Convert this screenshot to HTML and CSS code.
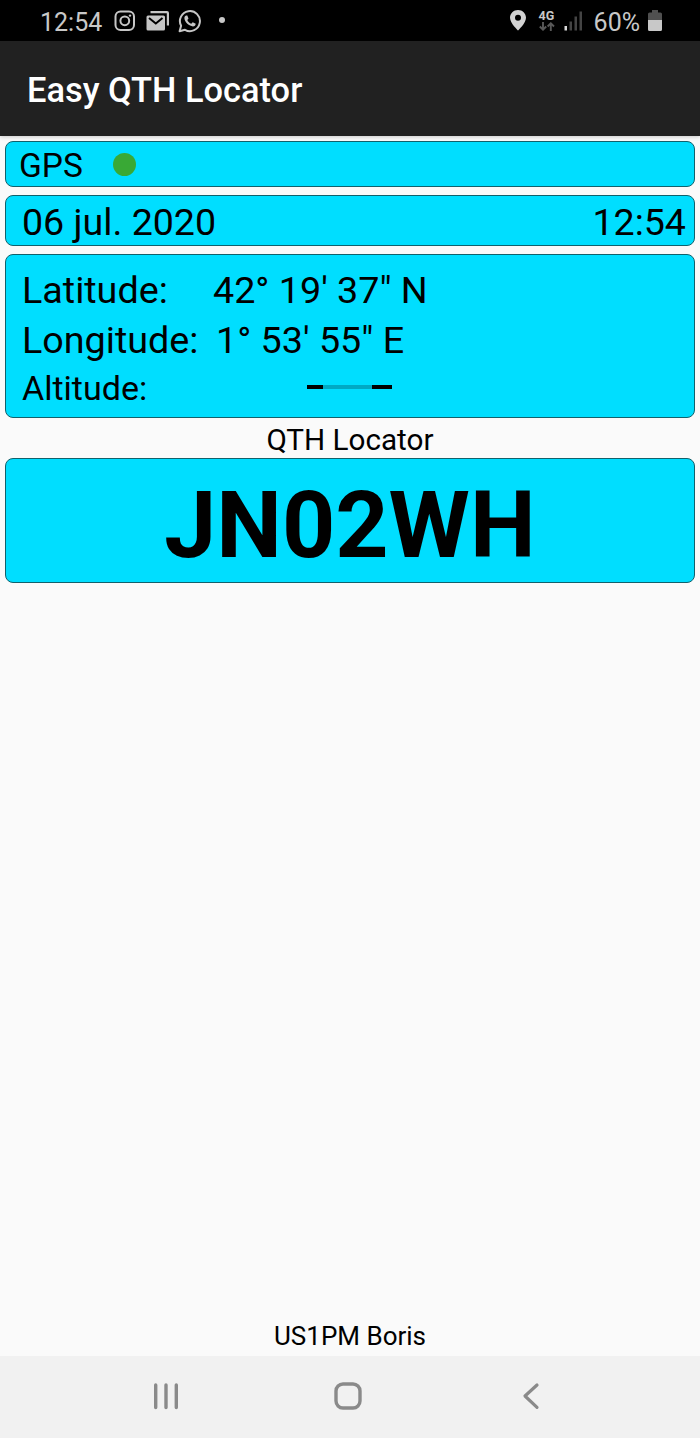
FILE: index.html
```
<!DOCTYPE html>
<html lang="en">

<head>
  <meta charset="UTF-8">
  <meta name="viewport" content="width=device-width, initial-scale=1.0">
  <title>Easy QTH Locator</title>
  <link rel="stylesheet" href="styles.css">
</head>

<body>
  <div class="status-bar">
    <div class="status-left">
      <span class="clock">12:54</span>
      <svg class="icon-instagram" width="22" height="22" viewBox="0 0 22 22" fill="none" stroke="#c6c6c6" stroke-width="2">
        <rect x="1.5" y="1.5" width="18.5" height="18.5" rx="5" />
        <circle cx="10.8" cy="10.8" r="4.4" />
        <circle cx="16" cy="5.6" r="1.2" fill="#c6c6c6" stroke="none" />
      </svg>
      <svg class="icon-mail" width="24" height="22" viewBox="0 0 24 22">
        <path d="M4.500 1H21a2 2 0 0 1 2 2v12.500h-2.200V3.200H4.500z" fill="#c6c6c6" />
        <rect x="0.500" y="5.500" width="18.500" height="15" rx="1.500" fill="#c6c6c6" />
        <path d="M3 8l6.800 5.500L16.500 8" fill="none" stroke="#000" stroke-width="2" />
      </svg>
      <svg class="icon-whatsapp" width="24" height="24" viewBox="0 0 24 24">
        <path d="M1.600 22.300l1.500-5.500A10 10 0 1 1 7 20.800z" fill="none" stroke="#c6c6c6" stroke-width="2" stroke-linejoin="round" />
        <path d="M8.200 6.500c-.8 0-1.800 1-1.800 2.600 0 4 5 8.300 8.500 8.300 1.600 0 2.800-1 2.800-2.600l-3-1.500-1.400 1.500c-1.800-.7-3.300-2.200-4-3.800l1.200-1.500-1.200-3z" fill="#c6c6c6" />
      </svg>
      <span class="more-dot"></span>
    </div>
    <div class="status-right">
      <svg class="icon-pin" width="16" height="21" viewBox="0 0 16 21">
        <path d="M8 0C3.500 0 0 3.500 0 7.800 0 13.200 8 20.500 8 20.500s8-7.300 8-12.700C16 3.500 12.500 0 8 0zm0 4.800a3 3 0 1 1 0 6 3 3 0 0 1 0-6z" fill="#d2d2d2" fill-rule="evenodd" />
      </svg>
      <div class="network">
        <span>4G</span>
        <svg width="16" height="9" viewBox="0 0 16 9" fill="none" stroke="#585858" stroke-width="1.900">
          <path d="M4 0v7.500M.8 4.500L4 7.700l3.200-3.200M11.800 9V1.500M8.600 4.500l3.200-3.200L15 4.500" />
        </svg>
      </div>
      <svg class="icon-signal" width="19" height="20" viewBox="0 0 19 20">
        <rect x="0.500" y="15" width="2.500" height="4.500" fill="#d8d8d8" />
        <rect x="5.500" y="10.500" width="2.500" height="9" fill="#444" />
        <rect x="10.500" y="5.500" width="2.500" height="14" fill="#444" />
        <rect x="15.500" y="0.500" width="2.500" height="19" fill="#444" />
      </svg>
      <span class="battery-level">60%</span>
      <svg class="icon-battery" width="14" height="21" viewBox="0 0 14 21">
        <path d="M4 0h6v2.500h2.500a1.500 1.500 0 0 1 1.500 1.500v6H0V4a1.500 1.500 0 0 1 1.500-1.500H4z" fill="#505050" />
        <path d="M0 10h14v9.500a1.500 1.500 0 0 1-1.500 1.500h-11A1.500 1.500 0 0 1 0 19.500z" fill="#c8c8c8" />
      </svg>
    </div>
  </div>

  <div class="app-bar">Easy QTH Locator</div>

  <div class="content">
    <div class="card gps">
      <span>GPS</span>
      <span class="gps-dot"></span>
    </div>

    <div class="card date-time">
      <span>06 jul. 2020</span>
      <span>12:54</span>
    </div>

    <div class="card position">
      <div class="row">
        <span class="label label-lat">Latitude:</span>
        <span class="value-lat">42° 19' 37" N</span>
      </div>
      <div class="row longitude">
        <span class="label label-lon">Longitude:</span>
        <span class="value-lon">1° 53' 55" E</span>
      </div>
      <div class="row altitude">
        <span class="label-alt">Altitude:</span>
        <span class="no-value"></span>
      </div>
    </div>

    <div class="locator-title">QTH Locator</div>
    <div class="card locator">JN02WH</div>

    <div class="author">US1PM Boris</div>
  </div>

  <div class="nav-bar">
    <svg width="28" height="28" viewBox="0 0 28 28" fill="none" stroke="#8a8a8a" stroke-width="3.400" stroke-linecap="round">
      <path d="M3.700 3v22.500M14 3v22.500M24.300 3v22.500" />
    </svg>
    <svg width="28" height="28" viewBox="0 0 28 28" fill="none" stroke="#8a8a8a" stroke-width="3.400">
      <rect x="2" y="2" width="24" height="24" rx="7" />
    </svg>
    <svg width="28" height="28" viewBox="0 0 28 28" fill="none" stroke="#8a8a8a" stroke-width="3.200" stroke-linecap="round" stroke-linejoin="round">
      <path d="M21 3L9 14l12 11.300" />
    </svg>
  </div>
</body>

</html>
```
FILE: styles.css
```
* {
  box-sizing: border-box;
}

body {
  margin: 0;
  height: 1438px;
  display: flex;
  flex-direction: column;
  background-color: #fafafa;
  font-family: Roboto, sans-serif;
  color: #000;
}

svg {
  display: block;
  flex: none;
}

/* status bar */
.status-bar {
  height: 41px;
  padding: 2px 38px 0 40px;
  display: flex;
  justify-content: space-between;
  align-items: center;
  background-color: #000;
  color: #c8c8c8;
  font-size: 25px;
}

.status-left,
.status-right {
  display: flex;
  align-items: center;
}

.clock,
.battery-level {
  padding-top: 1px;
}

.icon-instagram {
  margin: 0 10px 2px 12px;
}

.icon-mail {
  margin: 0 8px 2px 0;
}

.icon-whatsapp {
  margin-bottom: 2px;
}

.more-dot {
  width: 6px;
  height: 6px;
  margin: 0 0 3px 17px;
  border-radius: 50%;
  background-color: #c8c8c8;
}

.icon-pin {
  margin: 0 13px 2px 0;
}

.network {
  width: 18px;
  margin: 0 7px 3px 0;
  font-size: 12.5px;
  font-weight: 700;
  line-height: 12px;
}

.icon-signal {
  margin: 0 11px 2px 0;
}

.icon-battery {
  margin: 0 0 2px 8px;
}

/* title */
.app-bar {
  height: 95px;
  padding: 0 27px;
  line-height: 99px;
  background-color: #212121;
  box-shadow: 0 1px 4px rgba(0, 0, 0, 0.2);
  color: #fff;
  font-size: 34.4px;
  font-weight: 500;
}

.content {
  flex: 1;
  display: flex;
  flex-direction: column;
  padding: 5px 5px 0;
}

.card {
  border: 1px solid #12616c;
  border-radius: 8px;
  background-color: #00deff;
}

.gps {
  height: 46px;
  margin-bottom: 8px;
  padding: 3px 13px 0;
  display: flex;
  align-items: center;
  font-size: 33.5px;
}

.gps-dot {
  width: 23px;
  height: 23px;
  margin: 0 0 3px 30px;
  border-radius: 50%;
  background-color: #39a935;
}

.date-time {
  height: 51px;
  margin-bottom: 8px;
  padding: 3px 8px 0 16px;
  display: flex;
  justify-content: space-between;
  align-items: center;
  font-size: 37.6px;
}

.position {
  height: 164px;
  padding: 9px 16px 0;
}

.row {
  height: 51px;
  display: flex;
  align-items: center;
  font-size: 37.7px;
}

.label-lat {
  width: 191px;
}

.label-lon {
  width: 194px;
}

.longitude {
  padding-bottom: 1px;
}

.altitude {
  height: 44px;
  font-size: 34px;
}

.label-alt {
  width: 285px;
}

/* dashes shown while there is no altitude fix */
.no-value {
  width: 85px;
  height: 4px;
  margin-bottom: 3px;
  background: linear-gradient(to right, #000 16px, #00a9c4 16px, #00a9c4 65px, #000 65px);
}

.locator-title {
  height: 40px;
  line-height: 43px;
  text-align: center;
  font-size: 29.7px;
}

.locator {
  height: 125px;
  line-height: 133px;
  text-align: center;
  font-size: 93px;
  font-weight: 700;
}

.author {
  height: 41px;
  margin-top: auto;
  line-height: 42px;
  text-align: center;
  font-size: 26px;
}

/* navigation buttons */
.nav-bar {
  height: 82px;
  padding: 0 156px 3px 152px;
  display: flex;
  justify-content: space-between;
  align-items: center;
  background-color: #f1f1f1;
}
```
